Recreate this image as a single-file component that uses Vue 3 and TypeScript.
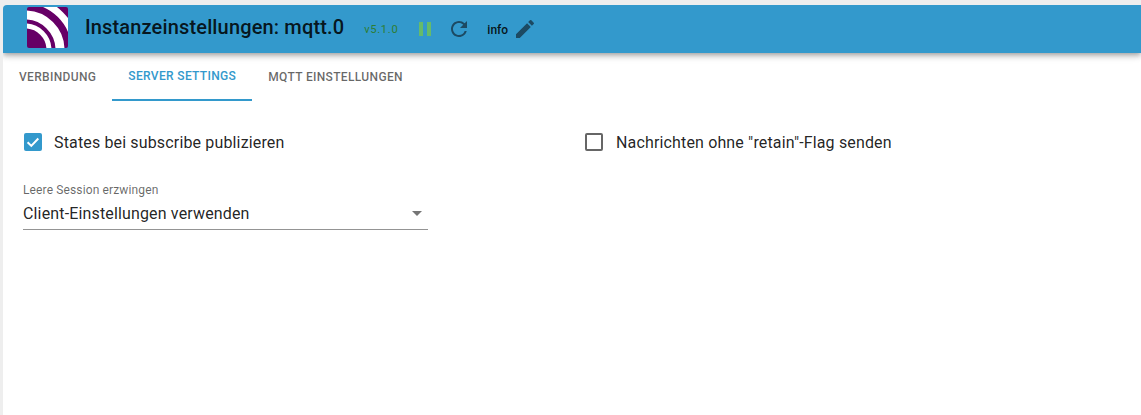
<script setup lang="ts">
const tabs = [
  { label: 'Verbindung', active: false },
  { label: 'Server settings', active: true },
  { label: 'MQTT Einstellungen', active: false },
]
</script>

<template>
  <div class="page">
    <div class="panel">
      <header class="bar">
        <svg class="logo" viewBox="0 0 41 41" width="41" height="41">
          <rect width="41" height="41" fill="#660066" />
          <g fill="none" stroke="#fff">
            <circle cx="-2" cy="43" r="24" stroke-width="5" />
            <circle cx="-2" cy="43" r="35" stroke-width="9" />
            <circle cx="-2" cy="43" r="50" stroke-width="7" />
          </g>
        </svg>
        <h1 class="title">Instanzeinstellungen: mqtt.0</h1>
        <span class="version">v5.1.0</span>
        <span class="pause"><i></i><i></i></span>
        <svg class="reload" viewBox="0 0 24 24" width="24" height="24">
          <path d="M17.65 6.35A7.958 7.958 0 0 0 12 4c-4.42 0-7.99 3.58-7.99 8s3.57 8 7.99 8c3.73 0 6.84-2.55 7.73-6h-2.08A5.99 5.99 0 0 1 12 18c-3.31 0-6-2.69-6-6s2.69-6 6-6c1.66 0 3.14.69 4.22 1.78L13 11h7V4l-2.35 2.35z" />
        </svg>
        <span class="level">info</span>
        <svg class="edit" viewBox="0 0 24 24" width="24" height="24">
          <path d="M3 17.25V21h3.75L17.81 9.94l-3.75-3.75L3 17.25zM20.71 7.04a.996.996 0 0 0 0-1.41l-2.34-2.34a.996.996 0 0 0-1.41 0l-1.83 1.83 3.75 3.75 1.83-1.83z" />
        </svg>
      </header>

      <nav class="tabs">
        <div v-for="tab in tabs" :key="tab.label" class="tab" :class="{ active: tab.active }">{{ tab.label }}</div>
      </nav>

      <main class="content">
        <div class="checks">
          <label class="check">
            <span class="box on">
              <svg viewBox="0 0 18 18" width="18" height="18">
                <path d="M3.6 9.2l3.7 3.7 7-7.4" fill="none" stroke="#fff" stroke-width="2" />
              </svg>
            </span>
            <span>States bei subscribe publizieren</span>
          </label>
          <label class="check">
            <span class="box"></span>
            <span>Nachrichten ohne "retain"-Flag senden</span>
          </label>
        </div>
        <div class="select">
          <div class="select-label">Leere Session erzwingen</div>
          <div class="select-value">
            <span>Client-Einstellungen verwenden</span>
            <span class="arrow"></span>
          </div>
        </div>
      </main>
    </div>
  </div>
</template>

<style>
html, body { margin: 0; background: #fff; }
</style>

<style scoped>
.page {
  width: 1141px;
  height: 415px;
  overflow: hidden;
  box-sizing: border-box;
  padding: 5px 0 0 3px;
  background: #eeeeee;
  font-family: Roboto, "Liberation Sans", sans-serif;
}
.panel {
  height: 100%;
  background: #fff;
  border-radius: 4px 0 0 0;
  overflow: hidden;
}
.bar {
  position: relative;
  height: 48px;
  background: #3399cc;
  display: flex;
  align-items: center;
  padding-left: 24px;
  box-shadow: 0 2px 4px -1px rgba(0,0,0,.2), 0 4px 5px 0 rgba(0,0,0,.14), 0 1px 10px 0 rgba(0,0,0,.12);
}
.logo { flex: none; margin-top: -3px; border-radius: 2px; }
.title {
  margin: -4px 0 0 17px;
  font-size: 20px;
  font-weight: 500;
  letter-spacing: .15px;
  color: rgba(0,0,0,.87);
  white-space: nowrap;
  line-height: 32px;
}
.version { margin-left: 20px; font-size: 11.2px; color: #2e7d32; letter-spacing: .65px; }
.pause { display: flex; gap: 4px; margin-left: 21px; }
.pause i { display: block; width: 4px; height: 14px; background: #66bb6a; }
.reload { margin-left: 16px; fill: #1c4a63; }
.level { margin: 2px 0 0 16px; font-size: 12px; font-weight: 500; color: rgba(0,0,0,.87); }
.edit { margin-left: 5px; fill: #1c4a63; }
.tabs { display: flex; height: 48px; }
.tab {
  box-sizing: border-box;
  height: 48px;
  padding: 0 16px;
  display: flex;
  align-items: center;
  font-size: 12px;
  font-weight: 500;
  letter-spacing: .34px;
  text-transform: uppercase;
  color: rgba(0,0,0,.6);
}
.tab.active { color: #3399cc; border-bottom: 2px solid #3399cc; }
.content { padding: 29px 0 0 20px; }
.checks { display: grid; grid-template-columns: 561px 1fr; padding-left: 1px; }
.check {
  display: flex;
  align-items: center;
  gap: 12px;
  height: 24px;
  font-size: 16px;
  letter-spacing: .15px;
  color: rgba(0,0,0,.87);
}
.check + .check { gap: 13px; }
.box {
  box-sizing: border-box;
  width: 18px;
  height: 18px;
  border: 2px solid #666;
  border-radius: 2px;
}
.box.on { border: 0; background: #3399cc; }
.box svg { display: block; }
.select { width: 405px; margin-top: 29px; }
.select-label { font-size: 12px; line-height: 14px; letter-spacing: .13px; color: rgba(0,0,0,.6); }
.select-value {
  display: flex;
  align-items: center;
  justify-content: space-between;
  height: 33px;
  box-sizing: border-box;
  border-bottom: 1px solid #949494;
  font-size: 16px;
  letter-spacing: .15px;
  color: rgba(0,0,0,.87);
  padding-right: 6px;
}
.arrow {
  width: 0;
  height: 0;
  border-left: 5px solid transparent;
  border-right: 5px solid transparent;
  border-top: 5px solid #757575;
}
</style>
